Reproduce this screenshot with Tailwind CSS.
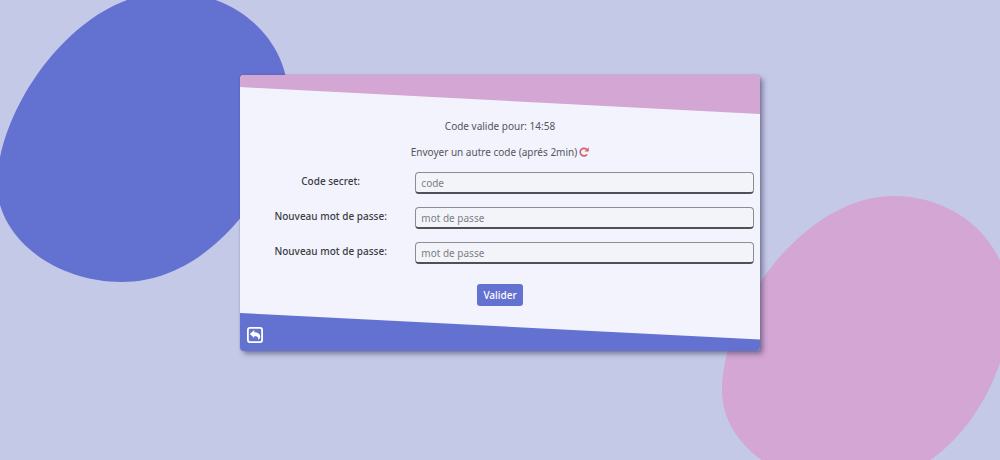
<!DOCTYPE html>
<html lang="fr">
<head>
<meta charset="utf-8">
<meta name="viewport" content="width=device-width, initial-scale=1">
<title>Nouveau mot de passe</title>
<script src="https://cdn.jsdelivr.net/npm/@tailwindcss/browser@4"></script>
</head>
<body class="relative min-h-screen overflow-hidden bg-[#c5c9e8] font-['Noto_Sans',sans-serif] text-[10px] leading-4 text-[#55555c]">
  <svg class="absolute left-0 top-0" width="300" height="300" viewBox="0 0 300 300" aria-hidden="true">
    <path fill="#6372d0" d="M-3 184C-3 110 75-8 170-8C237-8 288 40 288 97C288 175 215 282 122 282C55 282-3 238-3 184Z"/>
  </svg>
  <svg class="absolute bottom-0 right-0" width="300" height="280" viewBox="700 180 300 280" aria-hidden="true">
    <path fill="#d3a6d4" d="M722 390C722 310 805 196 893 196C960 196 1010 245 1010 306C1010 380 950 486 850 486C780 486 722 445 722 390Z"/>
  </svg>

  <main class="relative mx-auto mt-[75px] w-[52%] min-w-80 overflow-hidden rounded bg-[#f2f3fc] shadow-[3px_3px_5px_rgba(50,50,80,0.5),0_0_1px_rgba(50,50,80,0.8)]">
    <div class="h-[39px] bg-[#d3a6d4] [clip-path:polygon(0_0,100%_0,100%_100%,0_31%)]"></div>

    <form class="flex flex-col items-center px-1.5 pt-1" onsubmit="return false">
      <p>Code valide pour: 14:58</p>
      <p class="mt-2.5 flex items-center gap-0.5">
        Envoyer un autre code (aprés 2min)
        <button type="button" aria-label="Renvoyer le code">
          <svg class="block size-2.5" viewBox="0 0 20 20" fill="none" stroke="#d5606b" stroke-width="3.4" aria-hidden="true">
            <path d="M15.500 5A7.600 7.600 0 1 0 16 14.800"/>
            <path fill="#d5606b" stroke="none" d="M19.500 0.500V9H11Z"/>
          </svg>
        </button>
      </p>

      <div class="mt-3 grid w-full grid-cols-[1fr_2fr] gap-y-[13px]">
        <label for="code" class="pt-px text-center font-medium text-[#3c3c44]">Code secret:</label>
        <input id="code" type="text" placeholder="code" class="h-[22px] w-full rounded border border-b-2 border-[#8c8c94] border-b-[#505058] bg-[#f3f4fa] px-[5px] placeholder:text-[#7d7d85]">
        <label for="mdp1" class="pt-px text-center font-medium text-[#3c3c44]">Nouveau mot de passe:</label>
        <input id="mdp1" type="password" placeholder="mot de passe" class="h-[22px] w-full rounded border border-b-2 border-[#8c8c94] border-b-[#505058] bg-[#f3f4fa] px-[5px] placeholder:text-[#7d7d85]">
        <label for="mdp2" class="pt-px text-center font-medium text-[#3c3c44]">Nouveau mot de passe:</label>
        <input id="mdp2" type="password" placeholder="mot de passe" class="h-[22px] w-full rounded border border-b-2 border-[#8c8c94] border-b-[#505058] bg-[#f3f4fa] px-[5px] placeholder:text-[#7d7d85]">
      </div>

      <button type="submit" class="mt-5 h-[22px] rounded-[3px] bg-[#6372d0] px-1.5 font-medium text-white">Valider</button>
    </form>

    <div class="mt-[7px] flex h-[38px] items-end bg-[#6372d0] px-[7px] pb-2 [clip-path:polygon(0_0,100%_70%,100%_100%,0_100%)]">
      <a href="#" aria-label="Retour">
        <svg class="block size-4" viewBox="0 0 16 16" aria-hidden="true">
          <rect x="0.900" y="0.900" width="14.200" height="14.200" rx="2" fill="none" stroke="#fff" stroke-width="1.800"/>
          <path fill="#fff" d="M2.800 7L7.300 3V5.200C10.800 5.200 13.200 6.900 13.200 9.600C13.200 11 12.400 12.200 11.200 12.900C11.700 10.300 10.500 9 7.300 8.900V11Z"/>
        </svg>
      </a>
    </div>
  </main>
</body>
</html>
